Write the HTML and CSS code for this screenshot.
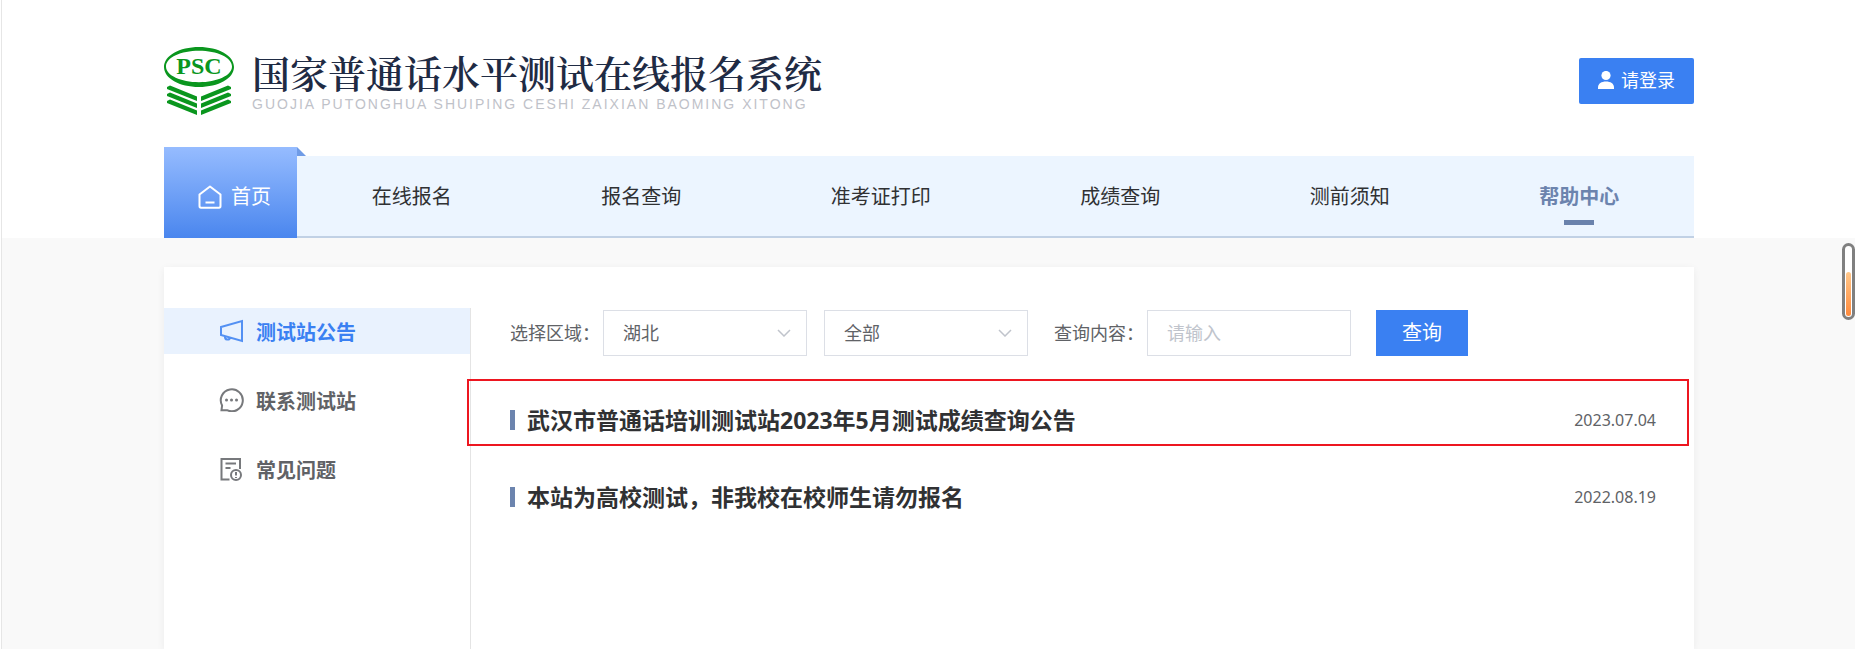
FILE: index.html
```html
<!DOCTYPE html>
<html lang="zh-CN">
<head>
<meta charset="utf-8">
<meta name="viewport" content="width=device-width, initial-scale=1">
<title>国家普通话水平测试在线报名系统</title>
<link rel="stylesheet" href="styles.css">
</head>
<body>
<div class="page">
  <header class="header">
    <div class="container masthead">
      <a class="brand" href="#">
        <svg class="brand-logo" viewBox="0 0 70 68" role="img" aria-label="PSC">
          <path fill="#0a961e" fill-rule="evenodd" d="M35 0C54.500 0 70 8.700 70 20S54.500 40 35 40 0 31.300 0 20 15.500 0 35 0ZM35 3.800C17 3.800 2 10.500 2 19.500S17 35.200 35 35.200 68 28.500 68 19.500 53 3.800 35 3.800Z"/>
          <text x="35" y="27" text-anchor="middle" class="brand-mark">PSC</text>
          <path fill="#0a961e" d="M6 38.500L33 49.500V54L3 42V40ZM6 45.500L33 56.500V61L3 49V47ZM6 52.500L33 63.500V68L3 56V54ZM64 38.500L37 49.500V54L67 42V40ZM64 45.500L37 56.500V61L67 49V47ZM64 52.500L37 63.500V68L67 56V54Z"/>
        </svg>
        <span class="brand-text">
          <span class="brand-title">国家普通话水平测试在线报名系统</span>
          <span class="brand-sub">GUOJIA PUTONGHUA SHUIPING CESHI ZAIXIAN BAOMING XITONG</span>
        </span>
      </a>
      <button class="login" type="button">
        <svg class="login-icon" viewBox="0 0 16 18" aria-hidden="true"><circle cx="8" cy="4.500" r="4.600"/><path d="M0 18V16.500C0 12.500 3.500 10.500 8 10.500S16 12.500 16 16.500V18Z"/></svg>
        请登录
      </button>
    </div>
    <nav class="container nav">
      <a class="home" href="#">
        <svg class="home-icon" viewBox="0 0 24 24" aria-hidden="true"><path d="M1.500 9.500 12 1.500 22.500 9.500V21Q22.500 22.800 21 22.800H3Q1.500 22.800 1.500 21ZM7.500 17.500H16.500"/></svg>
        首页
      </a>
      <div class="nav-links">
        <a href="#">在线报名</a>
        <a href="#">报名查询</a>
        <a href="#">准考证打印</a>
        <a href="#">成绩查询</a>
        <a href="#">测前须知</a>
        <a class="current" href="#">帮助中心</a>
      </div>
    </nav>
  </header>
  <main class="container card">
    <aside class="side">
      <a class="side-link active" href="#">
        <svg class="side-icon" viewBox="0 0 24 24" aria-hidden="true"><path d="M1.500 8 22.500 2V22L1.500 16ZM5.500 17C5 21.500 10 21.500 10.500 18.500"/></svg>
        测试站公告
      </a>
      <a class="side-link" href="#">
        <svg class="side-icon" viewBox="0 0 24 24" aria-hidden="true"><path d="M2 22.200 2.600 17.500A11 11 0 1 1 7.500 22.200Z"/><path class="dots" d="M7 12H7.010M12 12H12.010M17 12H17.010"/></svg>
        联系测试站
      </a>
      <a class="side-link" href="#">
        <svg class="side-icon" viewBox="0 0 24 24" aria-hidden="true"><path d="M10 22.500H2V2H20.500V12M6 6.500H16.500M6 11H11"/><circle cx="16.500" cy="18" r="5"/><path d="M16.500 15V18.500M16.500 20V21"/></svg>
        常见问题
      </a>
    </aside>
    <section class="content">
      <form class="filters">
        <label for="province">选择区域：</label>
        <span class="select"><select id="province"><option>湖北</option></select><svg class="chevron" viewBox="0 0 14 8" aria-hidden="true"><path d="M1 1 7 7 13 1"/></svg></span>
        <span class="select"><select id="station" aria-label="测试站"><option>全部</option></select><svg class="chevron" viewBox="0 0 14 8" aria-hidden="true"><path d="M1 1 7 7 13 1"/></svg></span>
        <label class="query-label" for="keyword">查询内容：</label>
        <input id="keyword" type="text" placeholder="请输入">
        <button class="search" type="submit">查询</button>
      </form>
      <ul class="notices">
        <li class="notice marked"><a href="#">武汉市普通话培训测试站2023年5月测试成绩查询公告</a><time datetime="2023-07-04">2023.07.04</time></li>
        <li class="notice"><a href="#">本站为高校测试，非我校在校师生请勿报名</a><time datetime="2022-08-19">2022.08.19</time></li>
      </ul>
    </section>
  </main>
  <div class="gauge" aria-hidden="true"><div class="gauge-fill"></div></div>
</div>
</body>
</html>
```
FILE: styles.css
```css
* { box-sizing: border-box; }

body {
  margin: 0;
  background: #fff;
  color: #303133;
  font-family: "Noto Sans", "Noto Sans CJK SC", sans-serif;
  font-size: 18px;
  line-height: 24px;
}

a { color: inherit; text-decoration: none; }

button, input, select { font: inherit; }

.page {
  position: relative;
  display: flex;
  flex-direction: column;
  min-height: 100vh;
  margin-left: 1px;
  padding-left: 1px;
  border-left: 1px solid #e6e6e6;
  background: #f9f9f9;
}

.header { margin-left: -1px; padding-left: 1px; background: #fff; }

.container { width: 100%; max-width: 1530px; margin: 0 auto; }

.masthead {
  display: flex;
  align-items: center;
  justify-content: space-between;
  padding: 47px 0 41px;
}

.brand { display: flex; align-items: center; gap: 18px; }

.brand-logo { width: 70px; height: 68px; }

.brand-mark {
  fill: #0a961e;
  font: bold 24px "Liberation Serif", serif;
}

.brand-text { display: flex; flex-direction: column; gap: 4px; padding-top: 2px; }

.brand-title {
  color: #1f2b44;
  font-family: "Noto Serif CJK SC", "Noto Sans CJK SC", serif;
  font-size: 38px;
  font-weight: 600;
  line-height: 40px;
}

.brand-sub {
  color: #bfc2c9;
  font-family: "Liberation Sans", sans-serif;
  font-size: 14px;
  line-height: 16px;
  letter-spacing: 2px;
}

.login {
  display: flex;
  align-items: center;
  gap: 7px;
  height: 46px;
  padding: 0 19px 2px;
  border: 0;
  border-radius: 2px;
  background: #3a80f2;
  color: #fff;
}

.login-icon { width: 16px; height: 18px; fill: #fff; }

.nav { display: flex; font-size: 20px; }

.home {
  position: relative;
  display: flex;
  align-items: center;
  gap: 9px;
  width: 133px;
  margin-top: -9px;
  padding: 8px 0 0 34px;
  background: linear-gradient(#96bcff, #4a86ee);
  color: #fff;
}

.home::after {
  content: "";
  position: absolute;
  top: 0;
  left: 100%;
  border-bottom: 9px solid #6f9be6;
  border-right: 9px solid transparent;
}

.home-icon {
  width: 24px;
  height: 24px;
  fill: none;
  stroke: #fff;
  stroke-width: 2;
  stroke-linejoin: round;
}

.nav-links {
  display: flex;
  flex: 1;
  align-items: center;
  justify-content: space-around;
  height: 82px;
  padding-top: 2px;
  border-bottom: 2px solid #c1d1e5;
  background: #ecf5ff;
}

.current { position: relative; color: #6c84ae; font-weight: 700; }

.current::after {
  content: "";
  position: absolute;
  top: 35px;
  left: calc(50% - 15px);
  width: 30px;
  height: 5px;
  background: #6a82ac;
}

.card {
  display: flex;
  flex: 1;
  margin-top: 29px;
  background: #fff;
  box-shadow: 0 2px 8px rgba(0, 0, 0, 0.06);
}

.side {
  display: flex;
  flex-direction: column;
  gap: 23px;
  width: 307px;
  margin-top: 41px;
  border-right: 1px solid #e4e4e4;
}

.side-link {
  display: flex;
  align-items: center;
  gap: 12px;
  height: 46px;
  padding: 3px 0 0 55px;
  color: #606266;
  font-size: 20px;
  font-weight: 700;
}

.side-link.active { background: #e9f2fe; color: #3a80f2; }

.side-icon {
  width: 25px;
  height: 24px;
  margin-bottom: 3px;
  fill: none;
  stroke: currentColor;
  stroke-width: 2;
  opacity: 0.85;
}

.dots { stroke-width: 3; stroke-linecap: round; }

.content { flex: 1; padding: 43px 38px 0 39px; }

.filters {
  display: flex;
  align-items: center;
  color: #606266;
}

.filters label { margin-right: 3px; }

.filters .query-label { margin-left: 9px; }

.select { position: relative; margin-right: 17px; }

.select select,
.filters input {
  display: block;
  width: 204px;
  height: 46px;
  padding: 0 19px;
  border: 1px solid #dcdfe6;
  border-radius: 0;
  background: #fff;
  color: #606266;
  appearance: none;
}

.filters input::placeholder { color: #c0c4cc; opacity: 1; }

.chevron {
  position: absolute;
  top: 19px;
  right: 16px;
  width: 14px;
  height: 8px;
  fill: none;
  stroke: #c0c4cc;
  stroke-width: 1.5;
  pointer-events: none;
}

.search {
  width: 92px;
  height: 46px;
  margin-left: 25px;
  padding: 0;
  border: 0;
  background: #3a80f2;
  color: #fff;
  font-size: 20px;
}

.notices { margin: 25px 0 0; padding: 0; list-style: none; }

.notice {
  position: relative;
  display: flex;
  align-items: center;
  height: 77px;
}

.notice::before {
  content: "";
  width: 5px;
  height: 20px;
  margin-right: 12px;
  background: #6c84ae;
}

.notice a { flex: 1; font-size: 23px; font-weight: 700; }

.notice time { color: #606266; font-size: 16px; }

.marked::after {
  content: "";
  position: absolute;
  inset: -2px -33px 12px -43px;
  border: 2px solid #ed1620;
}

.gauge {
  position: absolute;
  top: 243px;
  right: 0;
  display: flex;
  align-items: flex-end;
  width: 13px;
  height: 77px;
  padding: 1px;
  border: 3px solid #808080;
  border-radius: 7px;
  background: #fff;
}

.gauge-fill {
  width: 100%;
  height: 44px;
  border-radius: 3px;
  background: linear-gradient(#ffc78a, #ff8a3c);
}
```
